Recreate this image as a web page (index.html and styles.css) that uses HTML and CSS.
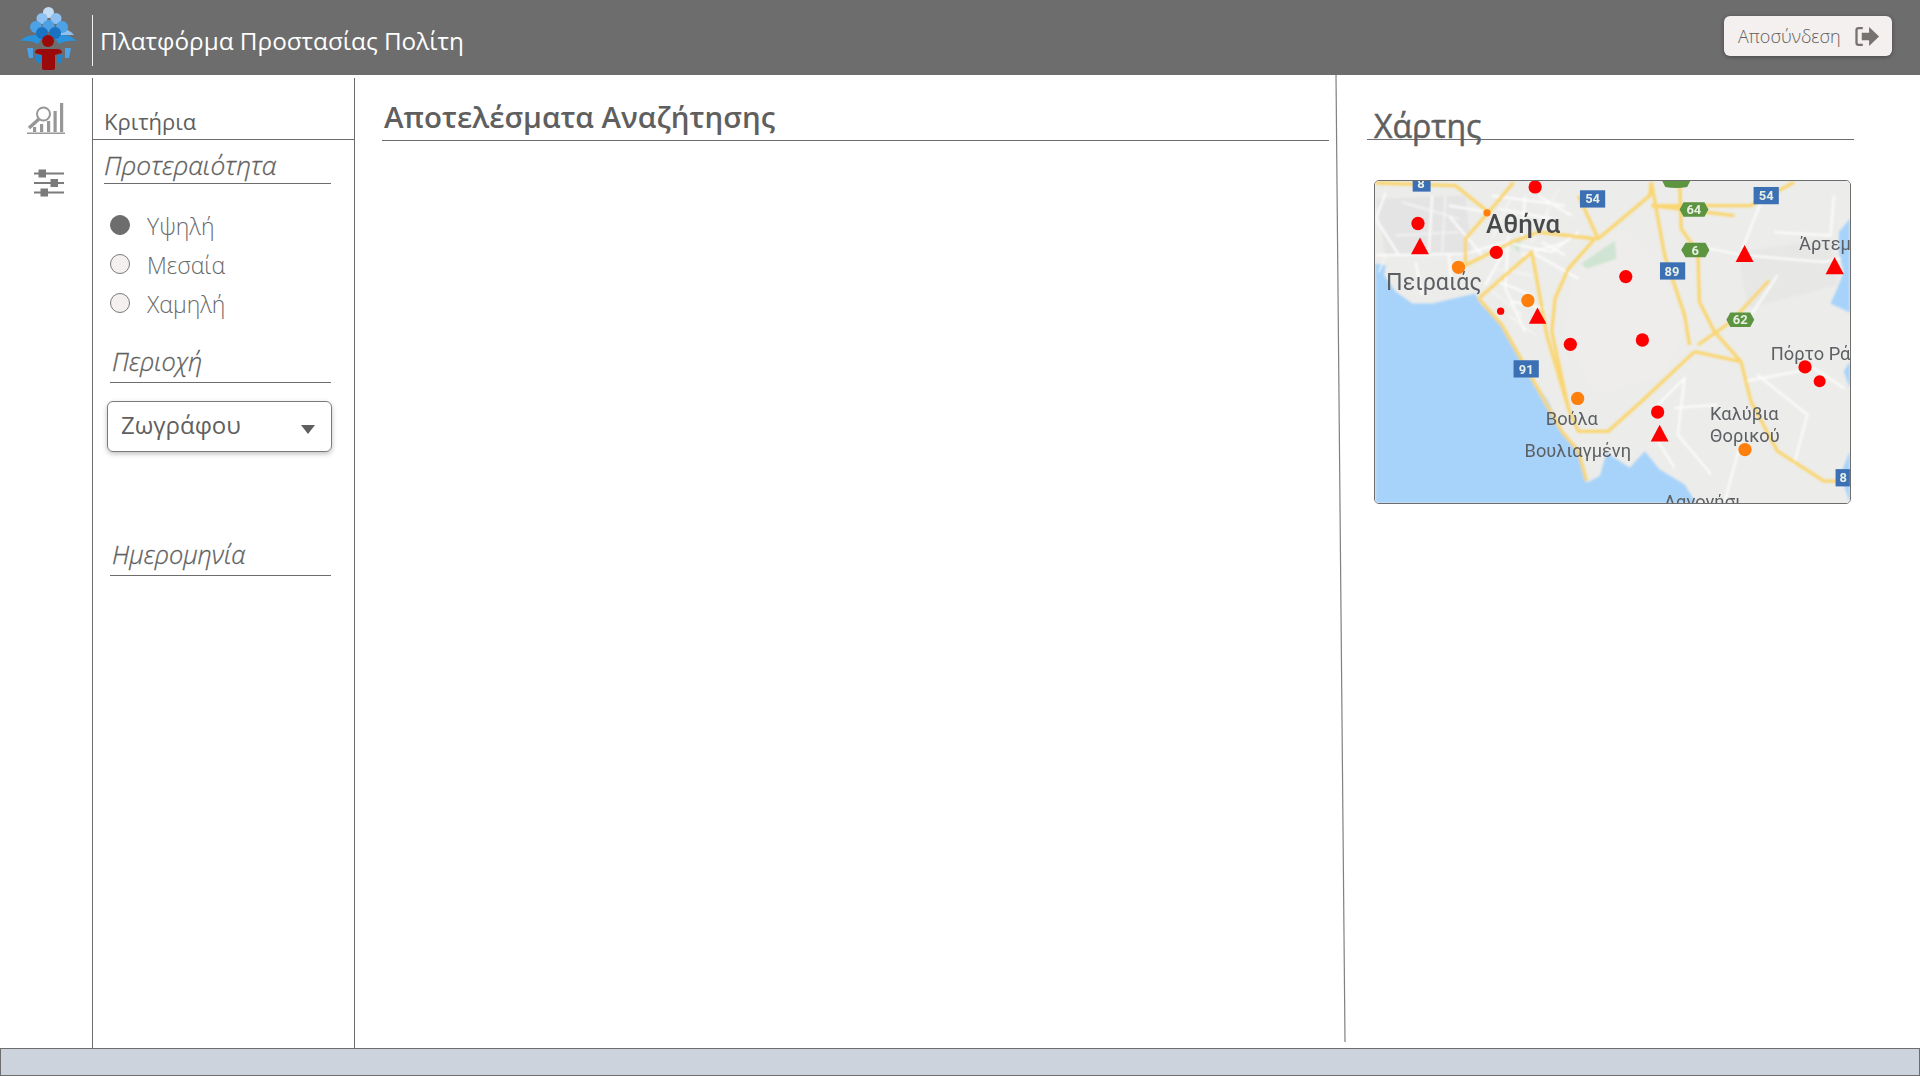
FILE: index.html
```html
<!DOCTYPE html>
<html lang="el">
<head>
    <meta charset="UTF-8">
    <meta name="viewport" content="width=device-width, initial-scale=1.0">
    <title>Πλατφόρμα Προστασίας Πολίτη</title>
    <link rel="stylesheet" href="styles.css">
</head>
<body>

    <!-- Top bar -->
    <header class="topbar">
        <svg class="logo" viewBox="0 0 70 75" aria-hidden="true">
            <path d="M47 27 l9 5 l3 3 h-14z" fill="#8fc0f2"/>
            <circle cx="33.5" cy="12.5" r="5.5" fill="#c5dcf5"/>
            <circle cx="27" cy="18.5" r="5.5" fill="#8fc0f2"/>
            <circle cx="41" cy="18.5" r="5.5" fill="#8fc0f2"/>
            <circle cx="21" cy="27" r="6" fill="#4da2e6"/>
            <circle cx="47" cy="27" r="6" fill="#4da2e6"/>
            <circle cx="33.5" cy="26" r="6" fill="#4da2e6"/>
            <path d="M5 41 q7 -7 16 -6 l7 2 l-5 7 q-8 -4 -18 -3z M62 41 q-7 -7 -16 -6 l-7 2 l5 7 q8 -4 18 -3z" fill="#2a93dc"/>
            <circle cx="27" cy="33" r="6" fill="#1a73c2"/>
            <circle cx="40" cy="33" r="6" fill="#1a73c2"/>
            <path d="M12 48 h6 v10 h-4z M50 48 h6 l-2 10 h-4z" fill="#4da2e6"/>
            <path d="M20 55 h6 v8 h-4z M42 55 h6 l-2 8 h-4z" fill="#1f83d0"/>
            <circle cx="33" cy="41" r="6" fill="#9a0a0a"/>
            <path d="M20 53 q0 -4 5 -4 h17 q5 0 5 4 l-7 2 v13 q0 2 -2 2 h-9 q-2 0 -2 -2 v-13z" fill="#9a0a0a"/>
        </svg>
        <h1 class="app-title">Πλατφόρμα Προστασίας Πολίτη</h1>
        <button class="logout-btn" type="button">
            Αποσύνδεση
            <svg class="logout-icon" viewBox="0 0 24 20" aria-hidden="true">
                <path d="M8 2 H4 Q2 2 2 4 V16 Q2 18 4 18 H8" fill="none" stroke="#77716f" stroke-width="2.2"/>
                <path d="M7 6.5 H14 V1 L23.5 10 L14 19 V13.5 H7z" fill="#77716f"/>
            </svg>
        </button>
    </header>

    <div class="content">

        <!-- Icon rail -->
        <nav class="rail">
            <svg class="rail-icon" viewBox="0 0 38 32" aria-hidden="true">
                <g fill="#979797">
                    <rect x="6" y="25" width="3.2" height="5"/>
                    <rect x="13" y="22" width="3.2" height="8"/>
                    <rect x="20" y="19" width="3.2" height="11"/>
                    <rect x="26.5" y="9" width="3.2" height="21"/>
                    <rect x="33" y="1" width="3.2" height="29"/>
                    <rect x="0" y="30.5" width="38" height="1.5"/>
                </g>
                <circle cx="16.5" cy="12" r="6.5" fill="#fff" stroke="#979797" stroke-width="2"/>
                <path d="M12 17 L2 26" stroke="#979797" stroke-width="3.4"/>
            </svg>
            <svg class="rail-icon-small" viewBox="0 0 30 28" aria-hidden="true">
                <g fill="#7b7b7b">
                    <rect x="0" y="3.5" width="30" height="2"/>
                    <rect x="0" y="13" width="30" height="2"/>
                    <rect x="0" y="22.5" width="30" height="2"/>
                    <rect x="4.5" y="0.5" width="7.5" height="8"/>
                    <rect x="16.5" y="10" width="7.5" height="8"/>
                    <rect x="6.5" y="19.5" width="7.5" height="8"/>
                </g>
            </svg>
        </nav>

        <!-- Search criteria -->
        <aside class="filters">
            <h2 class="filters-title">Κριτήρια</h2>

            <h3 class="filter-heading filter-heading-first">Προτεραιότητα</h3>
            <div class="radio-group">
                <label class="radio-row"><input type="radio" name="priority" checked> Υψηλή</label>
                <label class="radio-row"><input type="radio" name="priority"> Μεσαία</label>
                <label class="radio-row"><input type="radio" name="priority"> Χαμηλή</label>
            </div>

            <h3 class="filter-heading">Περιοχή</h3>
            <div class="select-box">Ζωγράφου</div>

            <h3 class="filter-heading filter-heading-date">Ημερομηνία</h3>
        </aside>

        <!-- Results -->
        <main class="results">
            <h2 class="results-title">Αποτελέσματα Αναζήτησης</h2>
        </main>

        <svg class="slant-divider" viewBox="0 0 11 100" preserveAspectRatio="none" aria-hidden="true">
            <line x1="1" y1="0" x2="10" y2="100" stroke="#808080" stroke-width="1.2" vector-effect="non-scaling-stroke"/>
        </svg>

        <!-- Map -->
        <section class="map-panel">
            <h2 class="map-title">Χάρτης</h2>
            <div class="map-box">
                <!-- viewBox units are 3x screen pixels -->
                <svg class="map" viewBox="28 16 1430 970" aria-label="Χάρτης">
                    <defs>
                        <filter id="soft" x="-5%" y="-5%" width="110%" height="110%">
                            <feGaussianBlur stdDeviation="3"/>
                        </filter>
                        <filter id="softer" x="-5%" y="-5%" width="110%" height="110%">
                            <feGaussianBlur stdDeviation="1.4"/>
                        </filter>
                    </defs>
                    <rect x="28" y="16" width="1430" height="970" fill="#ececea"/>
                    <g filter="url(#soft)">
                        <!-- Grey shading, parks -->
                        <path d="M620 300 L780 160 L880 260 L960 450 L900 600 L700 660 L600 500z" fill="#eeedeb"/>
                        <path d="M1120 230 L1400 190 L1420 330 L1150 400z" fill="#e7e7e6"/>
                        <path d="M30 70 L300 60 L320 240 L60 240z" fill="#e4e4e4"/>
                        <path d="M650 265 L750 195 L755 250 L665 280z" fill="#cfe4d2"/>
                        <path d="M430 200 L470 190 L460 230z" fill="#cfe4d2"/>

                        <!-- Sea -->
                        <path d="M28 265 L60 270 L55 300 L90 350 L140 385 L200 385 L330 355 L345 385 L405 445 L450 525 L500 610 L550 680 L590 770 L640 830 L665 925 L705 905 L725 835 L795 880 L840 830 L885 885 L960 930 L995 986 L28 986z" fill="#a7d3fa"/>
                        <path d="M1458 130 L1425 170 L1425 230 L1440 290 L1420 340 L1400 385 L1458 412z" fill="#a7d3fa"/>
                        <path d="M1458 560 L1440 590 L1458 640z" fill="#a7d3fa"/>
                        <path d="M1458 830 L1430 900 L1458 986z" fill="#a7d3fa"/>

                        <!-- Minor roads -->
                        <g fill="none" stroke="#fdfdfd" stroke-width="6">
                            <path d="M30 240 L300 235 L420 200 L560 230 L640 170"/>
                            <path d="M200 60 L190 230 M250 120 L350 240 M430 180 L420 340 L480 470 M500 230 L640 310 M60 50 L30 130 L100 240"/>
                            <path d="M420 220 L360 330 M530 200 L600 240 M480 60 L470 180 M370 110 L250 90"/>
                            <path d="M1010 215 L1140 240 L1380 260 L1430 250 M1130 230 L1190 80 M1230 170 L1400 180 L1410 60"/>
                            <path d="M1240 300 L1160 420 M1140 620 L1350 580 L1440 640 M1180 600 L1330 720 L1290 870 M1130 800 L1080 986"/>
                            <path d="M880 690 L960 610 L940 780 L1040 900 M930 700 L1060 690 M880 800 L930 880"/>
                            <path d="M400 100 L560 130 M470 240 L600 200 M380 60 L600 90 M150 260 L170 360 M250 240 L260 340 M400 320 L500 360 M440 380 L540 400 M520 60 L620 120"/>
                        </g>
                        <g fill="none" stroke="#f7f7f6" stroke-width="4">
                            <path d="M240 60 L230 230 M110 80 L280 130 M90 180 L280 170 M440 60 L380 190 M550 110 L500 200 M580 40 L540 120 M60 240 L40 290"/>
                            <path d="M390 280 L500 300 M370 340 L470 420 M430 420 L510 480"/>
                        </g>

                        <!-- Highways -->
                        <g fill="none" stroke="#fad670" stroke-width="10" stroke-linejoin="round">
                            <path d="M30 22 L270 30 L370 110 L300 190 L300 270 L440 200 L520 170 L690 190 L610 280 L570 370 L560 470 L610 700 L640 770 L730 770 L830 680 L990 530"/>
                            <path d="M370 110 L445 20 M640 60 L700 190 L855 60 L860 20"/>
                            <path d="M340 370 L500 230 L545 480 L610 700"/>
                            <path d="M860 90 L1110 120 M860 20 L900 240 L960 420 L975 510"/>
                            <path d="M945 20 L950 160 L1000 230 L1005 380 L1050 470 L1130 560 L1160 680 L1240 830 L1380 920 L1458 920"/>
                            <path d="M990 530 L1130 560 M1000 510 L1100 440 L1215 315 M860 90 L1160 90 L1290 20"/>
                            <path d="M340 370 L410 450 L500 610 L590 770 L640 830 L665 920"/>
                        </g>
                    </g>

                    <g filter="url(#softer)">
                        <!-- Road shields -->
                        <g class="shield-blue">
                            <rect x="141" y="16" width="54" height="32"/>
                            <rect x="645" y="44" width="76" height="52"/>
                            <rect x="1168" y="34" width="76" height="52"/>
                            <rect x="886" y="261" width="76" height="52"/>
                            <rect x="445" y="556" width="76" height="52"/>
                            <rect x="1415" y="884" width="43" height="52"/>
                        </g>
                        <g class="shield-green">
                            <path d="M893 16 H977 L968 34 Q935 40 902 34z"/>
                            <path d="M957 80 L1020 80 L1032 102 L1020 124 L957 124 L945 102z"/>
                            <path d="M963 202 L1023 202 L1035 224 L1023 246 L963 246 L950 224z"/>
                            <path d="M1098 412 L1158 412 L1170 434 L1158 456 L1098 456 L1086 434z"/>
                        </g>
                        <g class="shield-text">
                            <text x="166" y="38">8</text>
                            <text x="683" y="83">54</text>
                            <text x="1206" y="74">54</text>
                            <text x="922" y="301">89</text>
                            <text x="483" y="596">91</text>
                            <text x="1438" y="924">8</text>
                            <text x="988" y="116">64</text>
                            <text x="992" y="238">6</text>
                            <text x="1128" y="448">62</text>
                        </g>

                        <!-- Place names -->
                        <g class="place">
                            <text class="place-big" x="362" y="173">Αθήνα</text>
                            <text class="place-mid" x="61" y="343">Πειραιάς</text>
                            <text x="1305" y="224">Άρτεμ</text>
                            <text x="1220" y="555">Πόρτο Ρά</text>
                            <text x="1037" y="737">Καλύβια</text>
                            <text x="1037" y="801">Θορικού</text>
                            <text x="542" y="751">Βούλα</text>
                            <text x="478" y="846">Βουλιαγμένη</text>
                            <text x="898" y="1000">Λαγονήσι</text>
                        </g>

                        <!-- Markers -->
                        <g fill="#fe0000">
                            <circle cx="157" cy="144" r="20"/>
                            <circle cx="510" cy="34" r="20"/>
                            <circle cx="393" cy="231" r="20"/>
                            <circle cx="406" cy="408" r="11"/>
                            <circle cx="783" cy="304" r="20"/>
                            <circle cx="616" cy="508" r="20"/>
                            <circle cx="833" cy="495" r="20"/>
                            <circle cx="879" cy="712" r="20"/>
                            <circle cx="1323" cy="576" r="20"/>
                            <circle cx="1367" cy="619" r="18"/>
                            <path d="M163 186 L190 237 H136z"/>
                            <path d="M517 397 L544 446 H491z"/>
                            <path d="M1141 209 L1168 260 H1114z"/>
                            <path d="M1412 245 L1440 297 H1385z"/>
                            <path d="M885 750 L912 801 H858z"/>
                        </g>
                        <g fill="#ff7f0e">
                            <circle cx="365" cy="112" r="11"/>
                            <circle cx="279" cy="276" r="20"/>
                            <circle cx="488" cy="376" r="20"/>
                            <circle cx="638" cy="671" r="20"/>
                            <circle cx="1142" cy="825" r="20"/>
                        </g>
                    </g>
                </svg>
            </div>
        </section>
    </div>

    <footer class="statusbar"></footer>

</body>
</html>
```

FILE: styles.css
```css
/* Base Reset */
* {
    margin: 0;
    padding: 0;
    box-sizing: border-box;
}

body {
    font-family: 'Open Sans', 'Noto Sans', sans-serif;
    background: #fff;
    color: #5f5f5f;
    display: flex;
    flex-direction: column;
    height: 100vh;
    overflow: hidden;
}

/* Top bar */
.topbar {
    height: 75px;
    flex: none;
    background: #6d6d6d;
    display: flex;
    align-items: center;
    position: relative;
}

.logo {
    width: 70px;
    height: 75px;
    margin-left: 15px;
    flex: none;
}

.app-title {
    height: 51px;
    margin: 6px 0 0 7px;
    padding: 4px 0 0 7px;
    border-left: 1px solid #f0f0f0;
    font-size: 24.3px;
    font-weight: 400;
    line-height: 44px;
    color: #fff;
}

.logout-btn {
    margin-left: auto;
    margin-right: 28px;
    margin-top: -3px;
    width: 168px;
    height: 40px;
    padding: 0 12px 0 14px;
    display: flex;
    align-items: center;
    justify-content: space-between;
    background: #f3f0ef;
    border: none;
    border-radius: 6px;
    box-shadow: 0 1px 4px rgba(0, 0, 0, 0.35);
    font-family: inherit;
    font-size: 18px;
    font-weight: 300;
    color: #625e5c;
}

.logout-icon {
    width: 26px;
    height: 21px;
}

/* Main row */
.content {
    flex: 1;
    min-height: 0;
    display: flex;
}

/* Icon rail */
.rail {
    width: 92px;
    flex: none;
    display: flex;
    flex-direction: column;
    align-items: center;
    padding-top: 27px;
}

.rail-icon {
    width: 38px;
    height: 32px;
    margin-left: -1px;
}

.rail-icon-small {
    width: 30px;
    height: 28px;
    margin: 35px 0 0 5px;
}

/* Search criteria */
.filters {
    width: 263px;
    flex: none;
    margin-top: 3px;
    border-left: 1px solid #6d6d6d;
    border-right: 1px solid #6d6d6d;
}

.filters-title {
    height: 62px;
    padding: 27px 0 0 11px;
    border-bottom: 1px solid #6d6d6d;
    font-size: 22px;
    font-weight: 400;
    line-height: 32px;
}

.filter-heading {
    margin: 0 23px 0 17px;
    padding-left: 2px;
    height: 46px;
    border-bottom: 1px solid #6d6d6d;
    font-size: 25.3px;
    font-weight: 300;
    font-style: italic;
    line-height: 48px;
    -webkit-text-stroke: 0.3px #5f5f5f;
}

.filter-heading-first {
    height: 44px;
    margin-left: 11px;
    padding-left: 0;
    font-size: 26.3px;
    line-height: 50px;
}

.filter-heading-date {
    margin-top: 78px;
}

.radio-group {
    display: flex;
    flex-direction: column;
    gap: 7px;
    padding: 26px 0 17px 17px;
}

.radio-row {
    display: flex;
    align-items: center;
    gap: 17px;
    height: 32px;
    font-size: 23px;
    font-weight: 300;
    color: #6a6a6a;
}

.radio-row input {
    appearance: none;
    width: 20px;
    height: 20px;
    margin-top: -2px;
    border: 1px solid #7a7a7a;
    border-radius: 50%;
    background: #f3f0ef;
}

.radio-row input:checked {
    background: #6d6d6d;
    border-color: #6d6d6d;
}

.select-box {
    position: relative;
    width: 225px;
    height: 51px;
    margin: 18px 0 0 14px;
    padding-left: 13px;
    border: 1px solid #7a7a7a;
    border-radius: 6px;
    box-shadow: 0 2px 5px rgba(0, 0, 0, 0.25);
    font-size: 24px;
    line-height: 45px;
}

.select-box::after {
    content: "";
    position: absolute;
    right: 16px;
    top: 23px;
    border-left: 7px solid transparent;
    border-right: 7px solid transparent;
    border-top: 9px solid #5f5f5f;
}

/* Results */
.results {
    flex: 1;
    padding: 16px 6px 0 27px;
}

.results-title {
    height: 50px;
    padding-left: 2px;
    border-bottom: 1px solid #6d6d6d;
    font-size: 29.5px;
    font-weight: 600;
    line-height: 52px;
    white-space: nowrap;
}

.slant-divider {
    width: 11px;
    flex: none;
    margin-bottom: 6px;
}

/* Map */
.map-panel {
    width: 574px;
    flex: none;
    padding: 24px 66px 0 21px;
}

.map-title {
    height: 41px;
    padding-left: 7px;
    border-bottom: 1px solid #6d6d6d;
    font-size: 32px;
    font-weight: 400;
    line-height: 54px;
    white-space: nowrap;
    -webkit-text-stroke: 0.5px #5f5f5f;
}

.map-box {
    width: 477px;
    height: 324px;
    margin: 40px 0 0 7px;
    border: 1px solid #6d6d6d;
    border-radius: 5px;
    overflow: hidden;
}

.map {
    display: block;
    width: 100%;
    height: 100%;
}

.shield-blue {
    fill: #3a6fb5;
}

.shield-green {
    fill: #5d9440;
}

.shield-text {
    fill: #e8f0e6;
    font-family: 'Roboto', sans-serif;
    font-size: 39px;
    font-weight: 700;
    text-anchor: middle;
}

.place {
    fill: #5c5f63;
    font-family: 'Roboto', sans-serif;
    font-size: 55px;
}

.place .place-big {
    fill: #46484b;
    font-size: 78px;
    font-weight: 500;
}

.place .place-mid {
    font-size: 70px;
}

/* Status bar */
.statusbar {
    height: 28px;
    flex: none;
    background: #ccd3dc;
    border: 1px solid #6d6d6d;
}
```
